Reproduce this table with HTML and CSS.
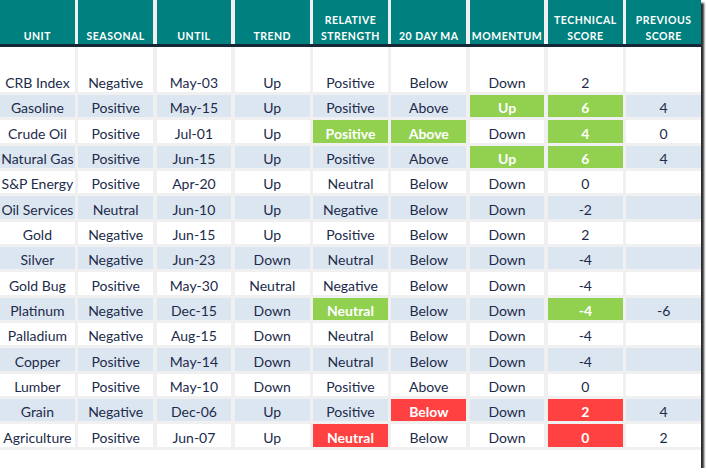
FILE: index.html
```html
<!DOCTYPE html>
<html>
<head>
<meta charset="utf-8">
<link rel="stylesheet" href="styles.css">
</head>
<body>
<div class="sheet">
  <div class="row head">
    <div class="cell">UNIT</div>
    <div class="cell">SEASONAL</div>
    <div class="cell">UNTIL</div>
    <div class="cell">TREND</div>
    <div class="cell">RELATIVE<br>STRENGTH</div>
    <div class="cell">20 DAY MA</div>
    <div class="cell">MOMENTUM</div>
    <div class="cell">TECHNICAL<br>SCORE</div>
    <div class="cell">PREVIOUS<br>SCORE</div>
  </div>
  <div class="rule"></div>
  <div class="body">
    <div class="row first">
      <div class="cell">CRB Index</div><div class="cell">Negative</div><div class="cell">May-03</div><div class="cell">Up</div><div class="cell">Positive</div><div class="cell">Below</div><div class="cell">Down</div><div class="cell">2</div><div class="cell"></div>
    </div>
    <div class="row alt">
      <div class="cell">Gasoline</div><div class="cell">Positive</div><div class="cell">May-15</div><div class="cell">Up</div><div class="cell">Positive</div><div class="cell">Above</div><div class="cell g">Up</div><div class="cell g">6</div><div class="cell">4</div>
    </div>
    <div class="row">
      <div class="cell">Crude Oil</div><div class="cell">Positive</div><div class="cell">Jul-01</div><div class="cell">Up</div><div class="cell g">Positive</div><div class="cell g">Above</div><div class="cell">Down</div><div class="cell g">4</div><div class="cell">0</div>
    </div>
    <div class="row alt">
      <div class="cell">Natural Gas</div><div class="cell">Positive</div><div class="cell">Jun-15</div><div class="cell">Up</div><div class="cell">Positive</div><div class="cell">Above</div><div class="cell g">Up</div><div class="cell g">6</div><div class="cell">4</div>
    </div>
    <div class="row">
      <div class="cell">S&amp;P Energy</div><div class="cell">Positive</div><div class="cell">Apr-20</div><div class="cell">Up</div><div class="cell">Neutral</div><div class="cell">Below</div><div class="cell">Down</div><div class="cell">0</div><div class="cell"></div>
    </div>
    <div class="row alt">
      <div class="cell">Oil Services</div><div class="cell">Neutral</div><div class="cell">Jun-10</div><div class="cell">Up</div><div class="cell">Negative</div><div class="cell">Below</div><div class="cell">Down</div><div class="cell">-2</div><div class="cell"></div>
    </div>
    <div class="row">
      <div class="cell">Gold</div><div class="cell">Negative</div><div class="cell">Jun-15</div><div class="cell">Up</div><div class="cell">Positive</div><div class="cell">Below</div><div class="cell">Down</div><div class="cell">2</div><div class="cell"></div>
    </div>
    <div class="row alt">
      <div class="cell">Silver</div><div class="cell">Negative</div><div class="cell">Jun-23</div><div class="cell">Down</div><div class="cell">Neutral</div><div class="cell">Below</div><div class="cell">Down</div><div class="cell">-4</div><div class="cell"></div>
    </div>
    <div class="row">
      <div class="cell">Gold Bug</div><div class="cell">Positive</div><div class="cell">May-30</div><div class="cell">Neutral</div><div class="cell">Negative</div><div class="cell">Below</div><div class="cell">Down</div><div class="cell">-4</div><div class="cell"></div>
    </div>
    <div class="row alt">
      <div class="cell">Platinum</div><div class="cell">Negative</div><div class="cell">Dec-15</div><div class="cell">Down</div><div class="cell g">Neutral</div><div class="cell">Below</div><div class="cell">Down</div><div class="cell g">-4</div><div class="cell">-6</div>
    </div>
    <div class="row">
      <div class="cell">Palladium</div><div class="cell">Negative</div><div class="cell">Aug-15</div><div class="cell">Down</div><div class="cell">Neutral</div><div class="cell">Below</div><div class="cell">Down</div><div class="cell">-4</div><div class="cell"></div>
    </div>
    <div class="row alt">
      <div class="cell">Copper</div><div class="cell">Positive</div><div class="cell">May-14</div><div class="cell">Down</div><div class="cell">Neutral</div><div class="cell">Below</div><div class="cell">Down</div><div class="cell">-4</div><div class="cell"></div>
    </div>
    <div class="row">
      <div class="cell">Lumber</div><div class="cell">Positive</div><div class="cell">May-10</div><div class="cell">Down</div><div class="cell">Positive</div><div class="cell">Above</div><div class="cell">Down</div><div class="cell">0</div><div class="cell"></div>
    </div>
    <div class="row alt">
      <div class="cell">Grain</div><div class="cell">Negative</div><div class="cell">Dec-06</div><div class="cell">Up</div><div class="cell">Positive</div><div class="cell r">Below</div><div class="cell">Down</div><div class="cell r">2</div><div class="cell">4</div>
    </div>
    <div class="row">
      <div class="cell">Agriculture</div><div class="cell">Positive</div><div class="cell">Jun-07</div><div class="cell">Up</div><div class="cell r">Neutral</div><div class="cell">Below</div><div class="cell">Down</div><div class="cell r">0</div><div class="cell">2</div>
    </div>
  </div>
  <div class="foot"></div>
</div>
</body>
</html>
```

FILE: styles.css
```css
html, body {
  margin: 0;
  padding: 0;
  background: #ffffff;
}

.sheet {
  width: 701px;
  background: #f0f0f0;
  box-shadow: 3px 3px 2px rgba(20, 20, 20, 0.9);
  font-family: Lato, "Open Sans", sans-serif;
}

.row {
  display: grid;
  grid-template-columns: repeat(9, 1fr);
  column-gap: 3.5px;
}

.cell {
  display: flex;
  align-items: flex-end;
  justify-content: center;
  text-align: center;
  background: #ffffff;
  color: #1c2b4a;
  font-size: 14px;
  line-height: 17px;
  padding-bottom: 1px;
  white-space: nowrap;
  box-sizing: border-box;
}

.head {
  height: 44px;
}

.head .cell {
  background: #00807e;
  color: #ffffff;
  font-weight: bold;
  font-size: 10.5px;
  line-height: 16px;
  letter-spacing: 0.5px;
  padding-bottom: 0.5px;
}

.rule {
  height: 3px;
  background: #17273a;
}

.body {
  display: flex;
  flex-direction: column;
  gap: 3px;
}

.body .row {
  height: 22.33px;
}

.body .row.first {
  height: 45px;
}

.body .row.first .cell {
  padding-bottom: 1px;
}

.row.alt .cell {
  background: #dce6f1;
}

.row .cell.g {
  background: #92d050;
  color: #ffffff;
  font-weight: bold;
}

.row .cell.r {
  background: #ff4141;
  color: #ffffff;
  font-weight: bold;
}

.foot {
  margin-top: 3px;
  height: 18.5px;
  background: #ffffff;
}
```
